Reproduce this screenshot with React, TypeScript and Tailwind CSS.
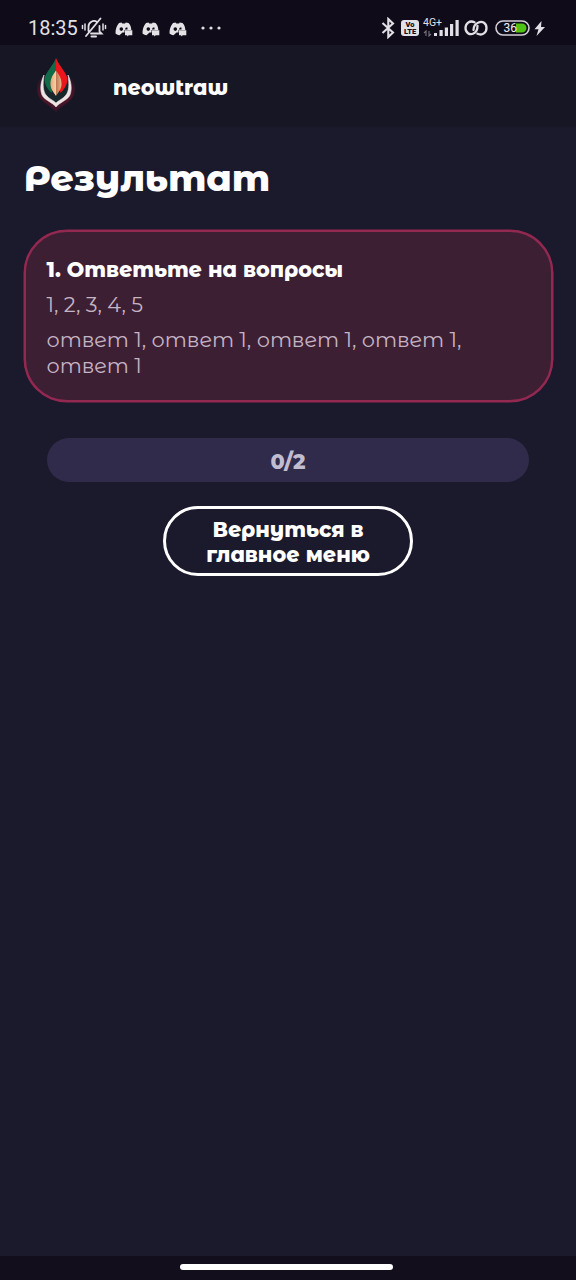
import React from "react";

function MutedBell() {
  return (
    <svg width="26" height="22" viewBox="0 0 26 22" fill="none" stroke="#e2e0e6" strokeWidth="1.8" strokeLinecap="round">
      <path d="M7.500 14V9.500a5.500 5.500 0 0 1 8.500-4.600M18.500 9v5.500l2 2H10M5 19L19.500 1.500" />
      <path d="M10.500 19.500h4.500" strokeWidth="2" />
      <path d="M4 7v6M1.500 8.500v3M22 7v6M24.500 8.500v3" strokeWidth="1.5" />
    </svg>
  );
}

function ChatPad() {
  return (
    <svg width="18" height="15" viewBox="0 0 18 15" fill="#e5e2e6">
      <path d="M4 1L6.500.5 7.300 1.500H10L10.800.5 13.500 1C15.500 3 16.300 5.500 16.300 8H9.500V10.500H7.500L4.500 13.300C2.600 13 1.300 12.300.5 11.500.4 7.500 1.600 3.800 4 1Z" />
      <circle cx="6.300" cy="7.100" r="1.800" fill="#0f0b19" />
      <path d="M11 5.600h1.500V7.600H10V7Z" fill="#0f0b19" />
      <path d="M10 8.300h7.300v5h-3.500l-1.600 1.200v-1.200H10Z" />
    </svg>
  );
}

function StatusBar() {
  return (
    <div className="flex h-[45px] shrink-0 items-start bg-[#0f0b19] pt-[11px] pl-7 font-['Roboto',sans-serif] text-[#e2e0e6]">
      <span className="mt-[5px] w-[53px] text-[20px] leading-[24px]">18:35</span>
      <span className="mt-[6px] w-[34px]"><MutedBell /></span>
      <span className="mt-[11px] flex w-[86px] gap-[9px]">
        <ChatPad />
        <ChatPad />
        <ChatPad />
      </span>
      <svg className="mt-[15px]" width="20" height="4" fill="#e2e0e6">
        <circle cx="2" cy="2" r="1.600" /><circle cx="10" cy="2" r="1.600" /><circle cx="18" cy="2" r="1.600" />
      </svg>
      <div className="ml-auto flex w-[195px] items-start">
        <svg className="mt-[6px] w-[14px]" width="14" height="22" viewBox="0 0 14 22" fill="none" stroke="#e2e0e6" strokeWidth="2.100">
          <path d="M1.500 6L12 15.500 7.300 20V2L12 6.500 1.500 16" />
        </svg>
        <span className="mt-[9px] ml-[6px] flex h-[16px] w-[18px] flex-col items-center rounded-[3px] bg-[#e2e0e6] pt-px text-[7.500px] leading-[7px] font-black text-[#0f0b19]">
          <span>Vo</span>
          <span>LTE</span>
        </span>
        <svg className="mt-[5px] ml-[4px]" width="38" height="22" viewBox="0 0 38 22" fill="#e2e0e6">
          <text x="0" y="10" fontSize="10.500" fontFamily="Roboto" textLength="19">4G+</text>
          <path d="M11 17h3v3h-3zM16.500 14h3.200v6h-3.200zM21.800 11.500h3.200v8.500h-3.200zM27 8h3.200v12h-3.200zM32.500 4h3.200v16h-3.200z" />
          <path d="M3 20v-5l-2 2M6 15v5l2-2" fill="none" stroke="#77737f" strokeWidth="1.100" />
        </svg>
        <svg className="mt-[9px] ml-[3px]" width="24" height="16" viewBox="0 0 24 16" fill="none" stroke="#e2e0e6" strokeWidth="2.300" strokeLinecap="round">
          <path d="M10.500 2.200C5.500 0 1.500 3.500 1.500 8s4 7.500 8 5.500C13 12 13.500 9 13.500 6" />
          <path d="M13.500 13.800C18.500 16 22.500 12.500 22.500 8s-4-7.500-8-5.500C11 4 9.500 7 9.500 10" />
        </svg>
        <svg className="mt-[9px] ml-[7px]" width="36" height="16" viewBox="0 0 36 16">
          <rect x="1" y="1" width="33" height="14" rx="7" fill="none" stroke="#d2d0d6" strokeWidth="1.600" />
          <path d="M21 3.500h6a4.500 4.500 0 0 1 0 9H21z" fill="#4fc213" />
          <text x="8.500" y="12.200" fontSize="12" fontFamily="Roboto" fill="#f1eff5">36</text>
        </svg>
        <svg className="mt-[10px] ml-[3px]" width="12" height="15" viewBox="0 0 12 15" fill="#e2e0e6">
          <path d="M7.500 0L.5 8.300H4.500L2.500 15 11 6H7Z" />
        </svg>
      </div>
    </div>
  );
}

function FlameLogo() {
  return (
    <svg width="42" height="56" viewBox="0 0 42 56">
      <defs>
        <linearGradient id="core" x1="0" x2="1">
          <stop offset="0" stopColor="#e9a877" />
          <stop offset=".48" stopColor="#f8d0a1" />
          <stop offset=".52" stopColor="#bc7654" />
          <stop offset="1" stopColor="#edb88a" />
        </linearGradient>
        <linearGradient id="halo" x1="0" x2="0" y1="0" y2="1">
          <stop offset="0" stopColor="#69132b" stopOpacity="0" />
          <stop offset=".65" stopColor="#4c1427" />
          <stop offset="1" stopColor="#69132b" stopOpacity=".3" />
        </linearGradient>
      </defs>
      <path d="M6 18C1 26 1 35 5 40 10 46 16 48 21 54 26 48 32 46 37 40 41 35 41 26 36 18Z" fill="url(#halo)" />
      <path d="M21 0C17 9 9 17 6 27V36L21 46 36 36V27C33 17 25 9 21 0Z" fill="#17252c" />
      <path d="M9 17C5 25 5 33 7.500 38 11 43 17 44 21 49 25 44 31 43 34.500 38 37 33 37 25 33 17 34.500 27 34 33 31 37 28 41 24 42 21 45 18 42 14 41 11 37 8 33 7.500 27 9 17Z" fill="#efe3e3" stroke="#efe3e3" strokeWidth=".6" />
      <path d="M21 0C18 8 10.500 14 9.500 21c0 6 4 11 7 14L21 18Z" fill="#126a48" />
      <path d="M21 0c3 8 10.500 14 11.500 21 0 6-4 11-7 14L21 18Z" fill="#ed151c" />
      <path d="M21 12.500C17 18 15.500 21 15.500 26c0 5 3 8 5.500 12 2.500-4 5.500-7 5.500-12 0-5-1.500-8-5.500-13.500Z" fill="url(#core)" />
    </svg>
  );
}

export default function App() {
  return (
    <div className="flex h-[1280px] w-[576px] flex-col overflow-hidden bg-[#1b192c] font-['Montserrat_Alternates','Montserrat','Inter',sans-serif] text-white">
      <StatusBar />
      <header className="flex h-[82px] shrink-0 items-center bg-[#171624] pl-[35px]">
        <FlameLogo />
        <span className="ml-[36px] pt-[3px] text-[20.7px] font-extrabold">neowtraw</span>
      </header>
      <main className="flex flex-1 flex-col items-center px-6">
        <h1 className="mt-[28px] self-start text-[36.7px] leading-[45px] font-extrabold">Результат</h1>
        <section className="mt-[30px] h-[172px] w-[529px] rounded-[43px] border-2 border-[#932850] bg-[#3d1f34] px-[21px] pt-[25px] text-[20.8px] leading-[26px] text-[#c5b4c4] shadow-[0_0_0_0.5px_#932850]">
          <h2 className="font-extrabold whitespace-nowrap text-white">1. Ответьте на вопросы</h2>
          <p className="mt-[9px]">1, 2, 3, 4, 5</p>
          <p className="mt-[9px] whitespace-nowrap">
            ответ 1, ответ 1, ответ 1, ответ 1,
            <br />
            ответ 1
          </p>
        </section>
        <div className="mt-[36px] flex h-[44px] w-[482px] items-center justify-center rounded-full bg-[#302b4b] pt-[3px] text-[20.8px] font-extrabold text-[#c1bdd0]">0/2</div>
        <button className="mt-[24px] h-[70px] w-[250px] rounded-full border-[3px] border-white pt-[2px] text-[20.8px] leading-[25px] font-extrabold">
          Вернуться в<br />
          главное меню
        </button>
      </main>
      <footer className="flex h-6 shrink-0 justify-center bg-[#130e1b] pt-[8px]">
        <div className="ml-[-3px] h-[6px] w-[213px] rounded-full bg-white" />
      </footer>
    </div>
  );
}
